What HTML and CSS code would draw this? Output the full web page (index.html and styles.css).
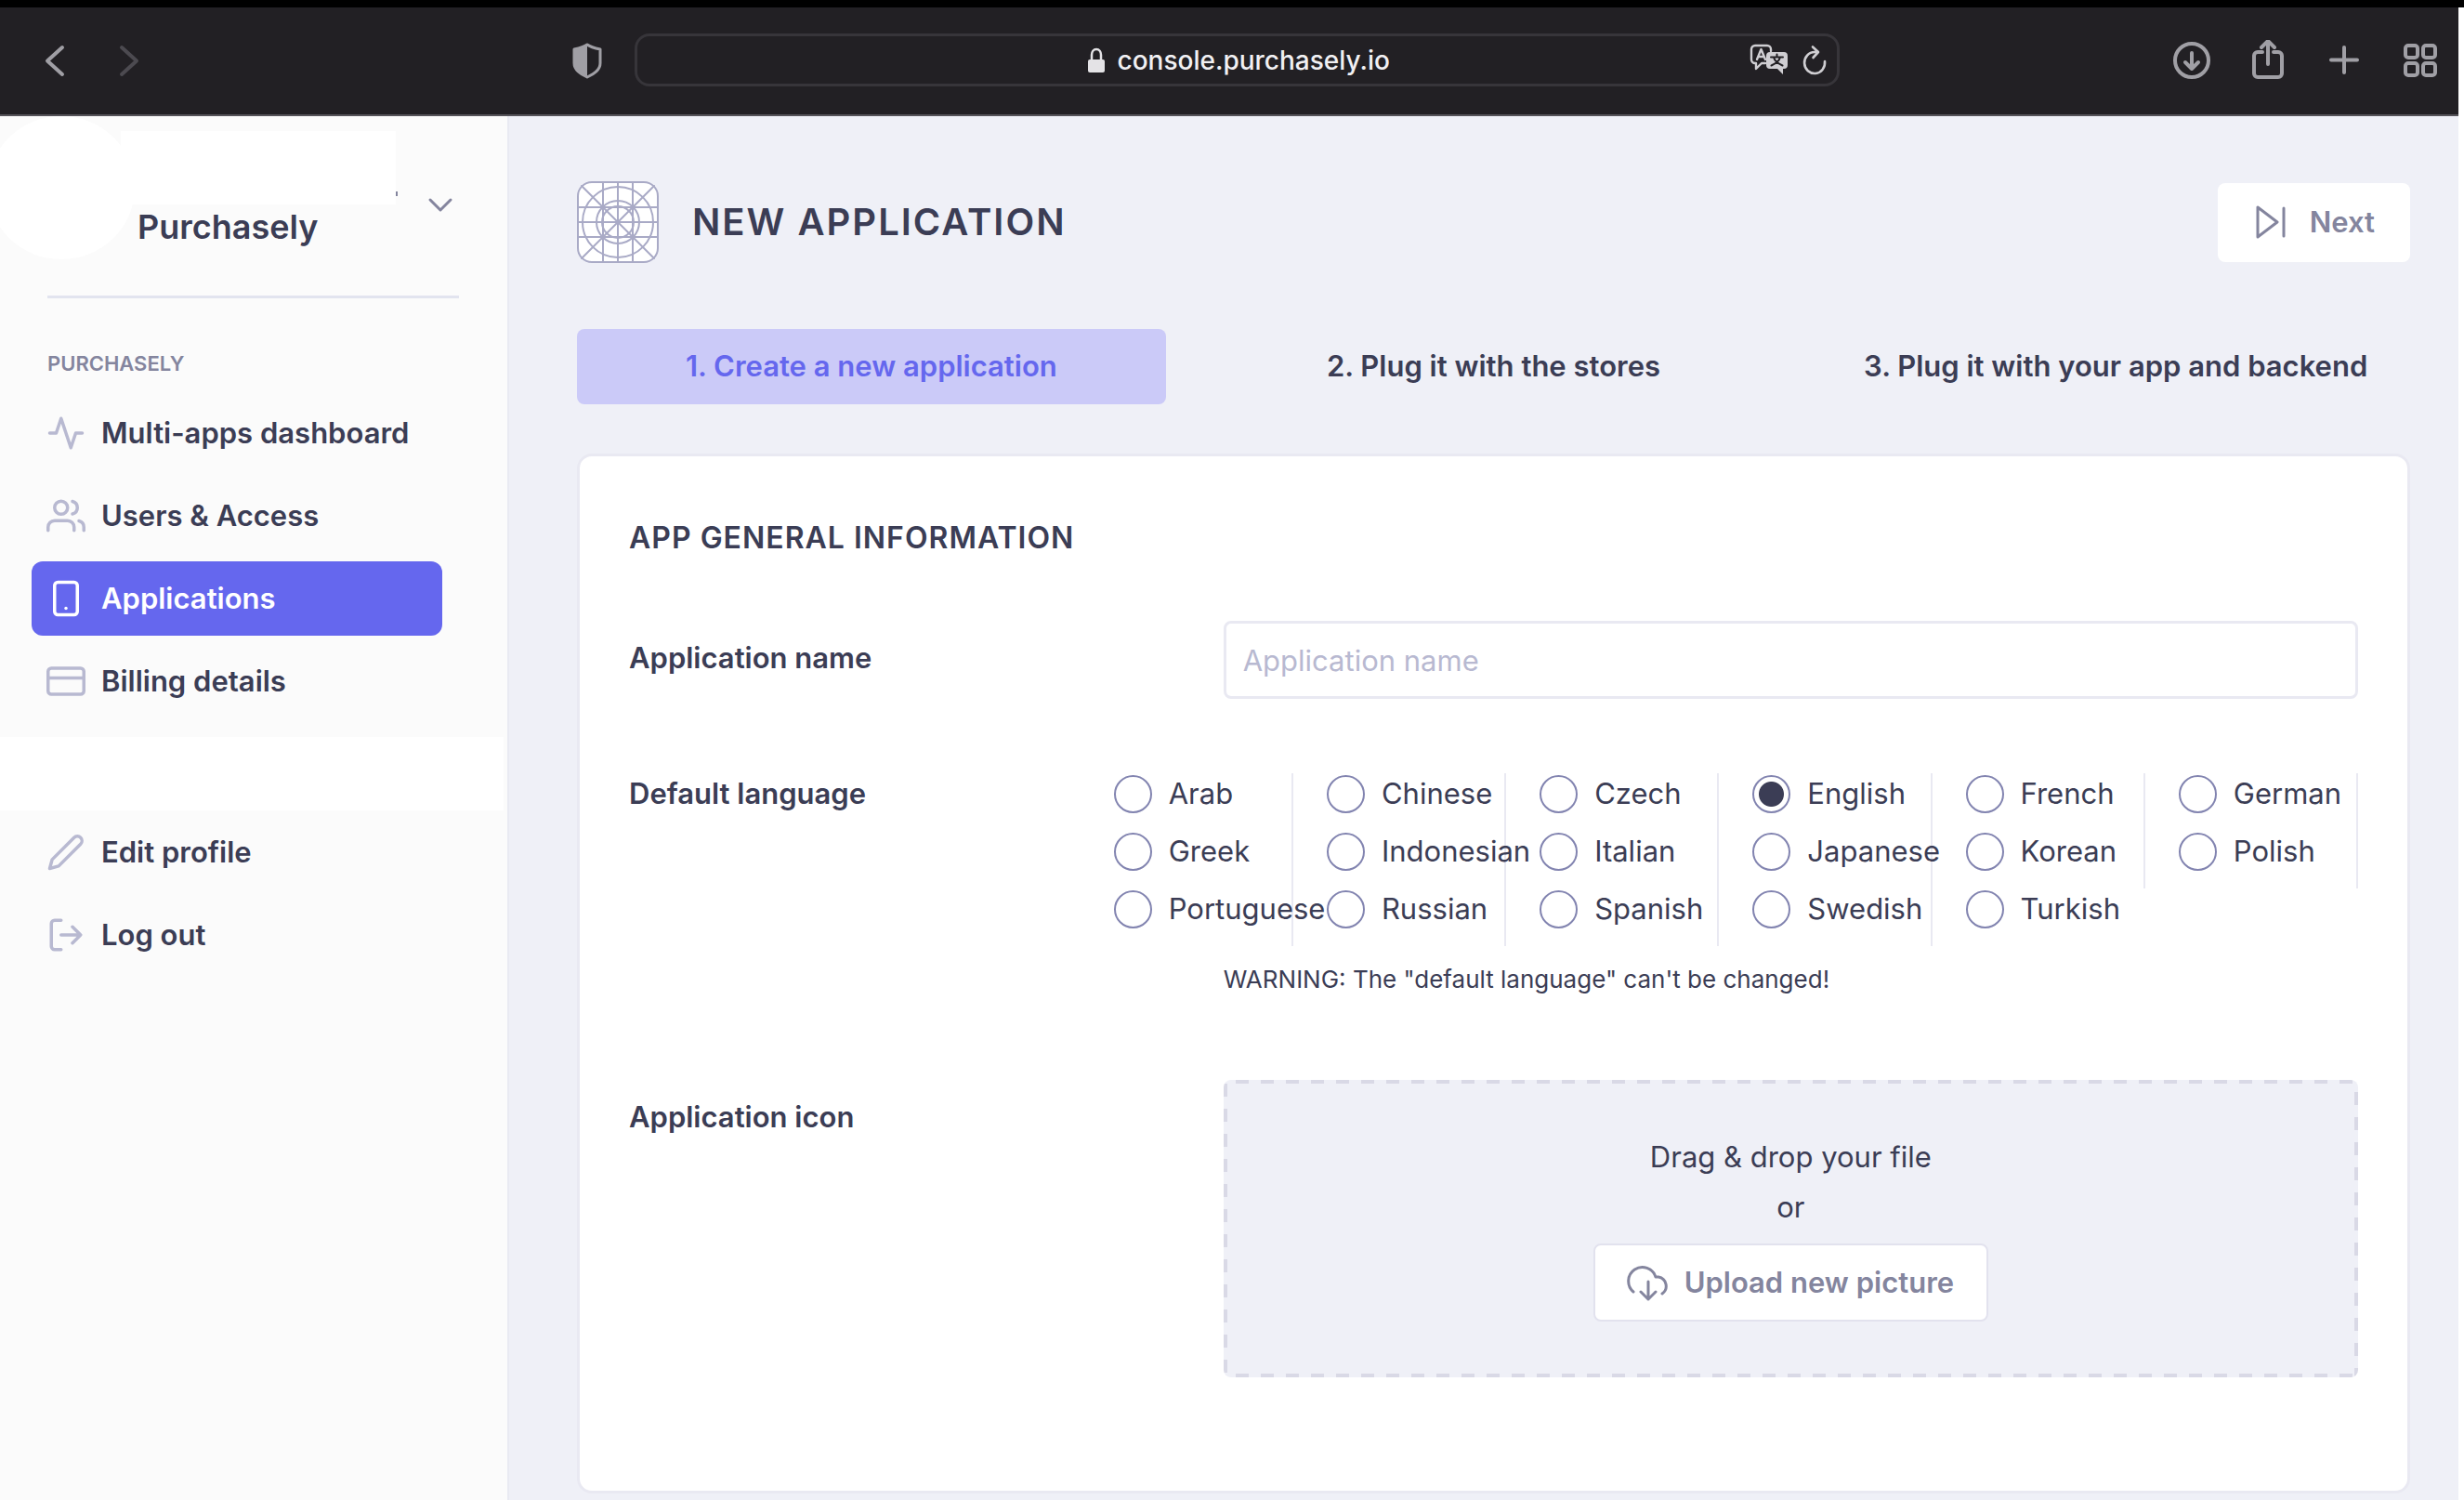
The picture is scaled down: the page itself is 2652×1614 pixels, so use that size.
FILE: index.html
```html
<!DOCTYPE html>
<html lang="en">
<head>
<meta charset="utf-8">
<meta name="viewport" content="width=device-width, initial-scale=1">
<title>New application - Purchasely</title>
<link rel="stylesheet" href="styles.css">
</head>
<body>
<div class="browser">
  <header class="toolbar">
    <div class="toolbar-left">
      <div class="history">
        <button class="tool" type="button" aria-label="Back"><svg width="40" height="40" viewBox="0 0 40 40"><path d="M27 6 11 20.500 27 35"/></svg></button>
        <button class="tool tool-off" type="button" aria-label="Forward"><svg width="40" height="40" viewBox="0 0 40 40"><path d="M11 6 27 20.500 11 35"/></svg></button>
      </div>
      <button class="tool" type="button" aria-label="Privacy report"><svg width="40" height="40" viewBox="0 0 40 40"><path d="M20 3c4 3 9 4 14 5v15c0 7-6 11-14 15C12 34 6 30 6 23V8c5-1 10-2 14-5z" stroke-width="3"/><path class="solid" d="M20 3v35C12 34 6 30 6 23V8c5-1 10-2 14-5z"/></svg></button>
    </div>
    <div class="address">
      <div class="address-main">
        <svg class="lock" width="22" height="30" viewBox="0 0 22 30"><rect class="solid" x="2" y="14" width="18" height="14" rx="2"/><path d="M6 15V9c0-3.500 2-6 5-6s5 2.500 5 6v6" stroke-width="2.500"/></svg>
        <input class="address-input" type="text" value="console.purchasely.io" aria-label="Address">
      </div>
      <div class="address-tools">
        <button class="mini" type="button" aria-label="Translate"><svg width="42" height="36" viewBox="0 0 42 36"><path d="M23 8V6a4 4 0 0 0-4-4H6a4 4 0 0 0-4 4v11a4 4 0 0 0 4 4h1v6l6-6h4M8 17l4.500-11L17 17M9.500 14h6" stroke-width="2.400"/><path class="solid" d="M22 9h15a4 4 0 0 1 4 4v10a4 4 0 0 1-4 4h-1v6l-6-6h-8a4 4 0 0 1-4-4V13a4 4 0 0 1 4-4z"/><path class="cut" d="M23 14.500h13M29.500 11.500v3M33 14.500c-1 4-5 7-9.500 9M26 14.500c1 4 5 7 9.500 9"/></svg></button>
        <button class="mini" type="button" aria-label="Reload"><svg width="28" height="34" viewBox="0 0 28 34"><path d="M25 18A11 11.500 0 1 1 14 8h3M12 2.500 18 8l-5.500 6" stroke-width="2.600"/></svg></button>
      </div>
    </div>
    <div class="toolbar-right">
      <button class="tool" type="button" aria-label="Downloads"><svg width="44" height="44" viewBox="0 0 44 44"><circle cx="22" cy="22" r="18"/><path d="M22 14v16M15 24l7 7 7-7"/></svg></button>
      <button class="tool" type="button" aria-label="Share"><svg width="44" height="44" viewBox="0 0 44 44"><path d="M16 13h-5a4 4 0 0 0-4 4v19a4 4 0 0 0 4 4h22a4 4 0 0 0 4-4V17a4 4 0 0 0-4-4h-5M22 26V2M15 8l7-7 7 7"/></svg></button>
      <button class="tool" type="button" aria-label="New tab"><svg width="44" height="44" viewBox="0 0 44 44"><path d="M22 8v27M8 21.500h28"/></svg></button>
      <button class="tool" type="button" aria-label="Tab overview"><svg width="44" height="44" viewBox="0 0 44 44"><rect x="6" y="6" width="13" height="13" rx="3"/><rect x="25" y="6" width="13" height="13" rx="3"/><rect x="6" y="25" width="13" height="13" rx="3"/><rect x="25" y="25" width="13" height="13" rx="3"/></svg></button>
    </div>
  </header>

  <div class="app">
    <aside class="sidebar">
      <div class="account">
        <div class="avatar"></div>
        <div class="account-names">
          <div class="account-user"><span class="user-blank"></span><span class="user-mark"></span></div>
          <div class="account-company">Purchasely</div>
        </div>
        <button class="account-toggle" type="button" aria-label="Switch account"><svg width="28" height="20" viewBox="0 0 28 20"><path d="M3 4l11 11L25 4"/></svg></button>
      </div>
      <nav class="menu" aria-label="Purchasely">
        <h2 class="menu-title">PURCHASELY</h2>
        <a class="menu-item" href="#dashboard"><svg viewBox="0 0 24 24"><path d="M22 12h-4l-3 9L9 3l-3 9H2"/></svg>Multi-apps dashboard</a>
        <a class="menu-item" href="#users"><svg viewBox="0 0 24 24"><path d="M17 21v-2a4 4 0 0 0-4-4H5a4 4 0 0 0-4 4v2"/><circle cx="9" cy="7" r="4"/><path d="M23 21v-2a4 4 0 0 0-3-3.870M16 3.130a4 4 0 0 1 0 7.750"/></svg>Users &amp; Access</a>
        <a class="menu-item menu-item-active" href="#applications" aria-current="page"><svg viewBox="0 0 24 24"><rect x="5" y="2" width="14" height="20" rx="2"/><path d="M12 18h.01"/></svg>Applications</a>
        <a class="menu-item" href="#billing"><svg viewBox="0 0 24 24"><rect x="1" y="4" width="22" height="16" rx="2"/><path d="M1 10h22"/></svg>Billing details</a>
        <div class="menu-blank"></div>
        <a class="menu-item" href="#profile"><svg viewBox="0 0 24 24"><path d="M17 3a2.828 2.828 0 1 1 4 4L7.500 20.500 2 22l1.500-5.500L17 3z"/></svg>Edit profile</a>
        <a class="menu-item" href="#logout"><svg viewBox="0 0 24 24"><path d="M9 21H5a2 2 0 0 1-2-2V5a2 2 0 0 1 2-2h4M16 17l5-5-5-5M21 12H9"/></svg>Log out</a>
      </nav>
    </aside>

    <main class="content">
      <div class="page-head">
        <svg class="app-icon" width="88" height="88" viewBox="0 0 88 88"><rect x="1" y="1" width="86" height="86" rx="15" fill="#fff"/><path d="M28 1v86M44 1v86M60 1v86M1 28h86M1 44h86M1 60h86M5 5l78 78M83 5 5 83"/><circle cx="44" cy="44" r="38"/><circle cx="44" cy="44" r="23"/><circle cx="44" cy="44" r="17"/></svg>
        <h1 class="page-title">NEW APPLICATION</h1>
        <button class="button next" type="button"><svg width="36" height="40" viewBox="0 0 36 40"><path d="M4 4v32l21-16zM32 5v30"/></svg>Next</button>
      </div>

      <nav class="steps" aria-label="Steps">
        <a class="step step-active" href="#step1" aria-current="step">1. Create a new application</a>
        <a class="step" href="#step2">2. Plug it with the stores</a>
        <a class="step" href="#step3">3. Plug it with your app and backend</a>
      </nav>

      <form class="card">
        <h2 class="card-title">APP GENERAL INFORMATION</h2>
        <div class="row">
          <label class="label" for="app-name">Application name</label>
          <input class="text-input" id="app-name" type="text" placeholder="Application name">
        </div>
        <div class="row row-languages" role="radiogroup" aria-labelledby="language-label">
          <div class="label" id="language-label">Default language</div>
          <div>
            <div class="languages">
              <label class="language"><input type="radio" name="language">Arab</label>
              <label class="language"><input type="radio" name="language">Chinese</label>
              <label class="language"><input type="radio" name="language">Czech</label>
              <label class="language"><input type="radio" name="language" checked>English</label>
              <label class="language"><input type="radio" name="language">French</label>
              <label class="language"><input type="radio" name="language">German</label>
              <label class="language"><input type="radio" name="language">Greek</label>
              <label class="language"><input type="radio" name="language">Indonesian</label>
              <label class="language"><input type="radio" name="language">Italian</label>
              <label class="language"><input type="radio" name="language">Japanese</label>
              <label class="language"><input type="radio" name="language">Korean</label>
              <label class="language"><input type="radio" name="language">Polish</label>
              <label class="language"><input type="radio" name="language">Portuguese</label>
              <label class="language"><input type="radio" name="language">Russian</label>
              <label class="language"><input type="radio" name="language">Spanish</label>
              <label class="language"><input type="radio" name="language">Swedish</label>
              <label class="language"><input type="radio" name="language">Turkish</label>
            </div>
            <p class="warning">WARNING: The "default language" can't be changed!</p>
          </div>
        </div>
        <div class="row">
          <div class="label">Application icon</div>
          <div class="dropzone">
            <p class="drop-text">Drag &amp; drop your file</p>
            <p class="drop-text">or</p>
            <button class="button upload" type="button"><svg width="48" height="42" viewBox="0 0 48 42"><path d="M9 31A15 15 0 1 1 33 15h3a10 10 0 0 1 4 18M25 20v19M17 31l8 8 8-8"/></svg>Upload new picture</button>
          </div>
        </div>
      </form>
    </main>
  </div>
</div>
</body>
</html>
```
FILE: styles.css
```css
:root {
  --ink: #3b3d55;
  --muted: #84859e;
  --faint: #b8b9d1;
  --line: #e9e9f2;
  --surface: #eff0f7;
  --accent: #6567ee;
}

* {
  box-sizing: border-box;
}

body {
  margin: 0;
  background: #fff;
  color: var(--ink);
  font: 400 31px/40px Inter, "Liberation Sans", sans-serif;
}

h1, h2, p {
  margin: 0;
}

button {
  padding: 0;
  border: 0;
  background: none;
  font: inherit;
  color: inherit;
}

a {
  color: inherit;
  text-decoration: none;
}

svg {
  display: block;
  flex: none;
  fill: none;
  stroke: currentColor;
  stroke-width: 3;
  stroke-linecap: round;
  stroke-linejoin: round;
}

.solid {
  fill: currentColor;
  stroke: none;
}

.browser {
  display: flex;
  flex-direction: column;
  min-height: 100vh;
  padding-right: 6px;
  border-top: 8px solid #000;
}

/* Browser toolbar */
.toolbar {
  display: grid;
  grid-template-columns: 683fr 1297fr 666fr;
  align-items: center;
  height: 117px;
  padding-bottom: 2px;
  border-bottom: 2px solid #555359;
  background: #222024;
  color: #a09fa5;
}

.tool svg {
  stroke-width: 4;
}

.toolbar-left {
  display: flex;
  align-items: center;
  justify-content: space-between;
  padding: 0 31px 0 40px;
}

.history {
  display: flex;
  gap: 40px;
}

.tool-off {
  color: #4c4a50;
}

.address {
  display: grid;
  grid-template-columns: 1fr auto 1fr;
  align-items: center;
  height: 57px;
  border: 3px solid #37353a;
  border-radius: 16px;
  color: #e4e3e6;
}

.address-main {
  display: flex;
  grid-column: 2;
  align-items: center;
  gap: 12px;
  padding-left: 4px;
}

.address-input {
  width: 296px;
  padding: 0;
  border: 0;
  outline: 0;
  background: none;
  color: #f1f0f3;
  font: 500 28px/40px Inter, "Liberation Sans", sans-serif;
}

.address-tools {
  display: flex;
  align-items: center;
  justify-content: flex-end;
  gap: 14px;
  padding-right: 10px;
}

.mini {
  color: #cfced2;
}

.cut {
  stroke: #222024;
  stroke-width: 2;
}

.toolbar-right {
  display: flex;
  justify-content: flex-end;
  gap: 38px;
  padding-right: 19px;
}

/* Page */
.app {
  display: grid;
  flex: 1;
  grid-template-columns: 548px 1fr;
}

.sidebar {
  border-right: 2px solid #e9eaf2;
  background: #fbfbfb;
}

.account {
  display: flex;
  height: 193px;
}

.avatar {
  width: 158px;
  height: 154px;
  margin-left: -13px;
  border-radius: 50%;
  background: #fff;
}

.account-names {
  margin: 16px 0 0 -15px;
}

.account-user {
  display: flex;
  align-items: flex-end;
}

.user-blank {
  width: 296px;
  height: 79px;
  background: #fff;
}

.user-mark {
  width: 2px;
  height: 5px;
  margin-bottom: 9px;
  background: var(--muted);
}

.account-company {
  padding-left: 18px;
  font-size: 36px;
  font-weight: 600;
  line-height: 48px;
}

.account-toggle {
  align-self: flex-start;
  margin: 86px 0 0 32px;
  color: var(--muted);
}

.menu {
  display: flex;
  flex-direction: column;
  gap: 9px;
  padding: 0 70px 0 34px;
}

.menu-title {
  margin: 0 -18px 0 17px;
  padding: 55px 0 11px;
  border-top: 3px solid #e2e4ef;
  color: var(--muted);
  font-size: 22px;
  font-weight: 600;
  line-height: 30px;
}

.menu-item {
  display: flex;
  align-items: center;
  gap: 17px;
  height: 80px;
  padding-left: 16px;
  border-radius: 12px;
  font-weight: 600;
}

.menu-item svg {
  width: 42px;
  height: 42px;
  color: var(--faint);
  stroke-width: 2;
}

.menu-item-active {
  background: var(--accent);
  color: #fff;
}

.menu-item-active svg {
  color: #fff;
}

.menu-blank {
  height: 79px;
  margin: 11px -66px -4px -34px;
  background: #fff;
}

.content {
  padding: 70px 52px 6px 73px;
  background: var(--surface);
}

.page-head {
  display: flex;
  align-items: center;
}

.app-icon {
  color: #a9aac6;
  stroke-width: 2;
}

.page-title {
  flex: 1;
  padding-left: 36px;
  font-size: 40px;
  font-weight: 600;
  letter-spacing: 2px;
  line-height: 48px;
}

.button {
  display: flex;
  align-items: center;
  border-radius: 8px;
  background: #fff;
  color: var(--muted);
  font-weight: 600;
}

.next {
  gap: 24px;
  height: 85px;
  padding: 0 38px 0 39px;
}

.steps {
  display: grid;
  grid-template-columns: repeat(3, 1fr);
  gap: 36px;
  margin: 71px 0 53px;
}

.step {
  padding: 20px 0 21px;
  border-radius: 8px;
  font-weight: 600;
  text-align: center;
}

.step-active {
  background: #cbcaf8;
  color: var(--accent);
}

.card {
  padding: 68px 53px 122px;
  border: 3px solid var(--line);
  border-radius: 16px;
  background: #fff;
}

.card-title {
  margin-bottom: 69px;
  font-size: 32px;
  font-weight: 600;
  letter-spacing: 1px;
  line-height: 40px;
}

.row {
  display: grid;
  grid-template-columns: 11fr 21fr;
}

.row + .row {
  margin-top: 80px;
}

.label {
  padding-top: 20px;
  font-weight: 600;
}

.row-languages {
  padding-bottom: 12px;
}

.row-languages .label {
  padding-top: 2px;
}

.text-input {
  width: 100%;
  height: 84px;
  padding: 0 18px;
  border: 3px solid var(--line);
  border-radius: 8px;
  background: #fff;
  color: var(--ink);
  font: inherit;
}

.text-input::placeholder {
  color: var(--faint);
}

.languages {
  display: grid;
  grid-template-columns: repeat(6, minmax(0, 1fr));
  margin-left: -154px;
}

.language {
  display: flex;
  align-items: flex-start;
  gap: 18px;
  height: 62px;
  padding: 2px 0 0 36px;
  border-right: 2px solid var(--line);
  white-space: nowrap;
}

.language:last-child {
  border-right: 0;
}

.language input {
  flex: none;
  width: 41px;
  height: 41px;
  margin: 0;
  border: 2px solid #8284b0;
  border-radius: 50%;
  appearance: none;
  background: #fff;
}

.language input:checked {
  background: radial-gradient(circle, var(--ink) 13px, #fff 14px);
}

.warning {
  margin-top: 20px;
  font-size: 26px;
  line-height: 32px;
}

.dropzone {
  --dash: #d9d9e6;
  display: flex;
  flex-direction: column;
  align-items: center;
  padding: 56px 0 60px;
  border-radius: 8px;
  background:
    repeating-linear-gradient(90deg, transparent 0 13px, var(--dash) 13px 27px) top / 100% 4px no-repeat,
    repeating-linear-gradient(90deg, transparent 0 13px, var(--dash) 13px 27px) bottom / 100% 4px no-repeat,
    repeating-linear-gradient(180deg, transparent 0 4px, var(--dash) 4px 18px, transparent 18px 27px) left / 4px 100% no-repeat,
    repeating-linear-gradient(180deg, transparent 0 13px, var(--dash) 13px 27px) right / 4px 100% no-repeat,
    var(--surface);
}

.drop-text {
  line-height: 54px;
}

.upload {
  gap: 16px;
  height: 84px;
  margin-top: 12px;
  padding: 0 35px 0 32px;
  border: 2px solid #e2e2ee;
}
```
